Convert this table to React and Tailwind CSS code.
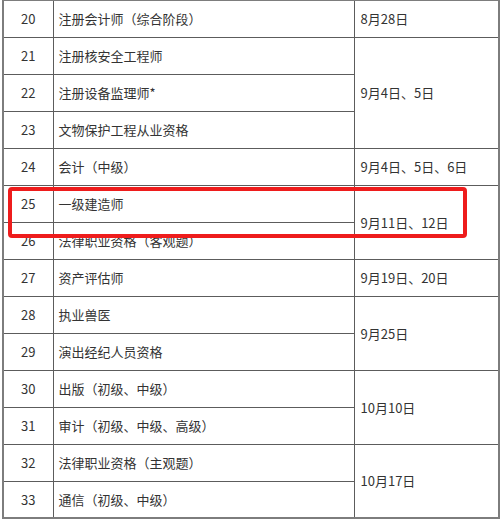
import React from 'react';

const rows = [
  { no: 20, name: '注册会计师（综合阶段）', date: '8月28日', span: 1 },
  { no: 21, name: '注册核安全工程师', date: '9月4日、5日', span: 3 },
  { no: 22, name: '注册设备监理师*' },
  { no: 23, name: '文物保护工程从业资格' },
  { no: 24, name: '会计（中级）', date: '9月4日、5日、6日', span: 1 },
  { no: 25, name: '一级建造师', date: '9月11日、12日', span: 2 },
  { no: 26, name: '法律职业资格（客观题）' },
  { no: 27, name: '资产评估师', date: '9月19日、20日', span: 1 },
  { no: 28, name: '执业兽医', date: '9月25日', span: 2 },
  { no: 29, name: '演出经纪人员资格' },
  { no: 30, name: '出版（初级、中级）', date: '10月10日', span: 2 },
  { no: 31, name: '审计（初级、中级、高级）' },
  { no: 32, name: '法律职业资格（主观题）', date: '10月17日', span: 2 },
  { no: 33, name: '通信（初级、中级）' },
];

export default function App() {
  return (
    <div
      className="relative w-[500px] h-[522px] bg-white overflow-hidden text-[13px] text-[#333]"
      style={{ fontFamily: '"Noto Sans CJK SC", "Noto Sans", sans-serif' }}
    >
      <table className="ml-[2px] -mt-[1px] w-[496px] border-collapse table-fixed border-2 border-[#7d7d7d]">
        <colgroup>
          <col className="w-[50px]" />
          <col className="w-[301px]" />
          <col className="w-[145px]" />
        </colgroup>
        <tbody>
          {rows.map((r) => (
            <tr key={r.no} className="h-[37px]">
              <td className="border border-[#5c5c5c] text-center leading-none">{r.no}</td>
              <td className="border border-[#5c5c5c] pl-[5px] leading-none">{r.name}</td>
              {r.date && (
                <td rowSpan={r.span} className="border border-[#5c5c5c] pl-[6px] leading-none">
                  {r.date}
                </td>
              )}
            </tr>
          ))}
        </tbody>
      </table>
      <div className="absolute left-[8px] top-[187px] w-[459px] h-[51px] border-[4px] border-[#ee1c1c] rounded-[4px]" />
    </div>
  );
}
